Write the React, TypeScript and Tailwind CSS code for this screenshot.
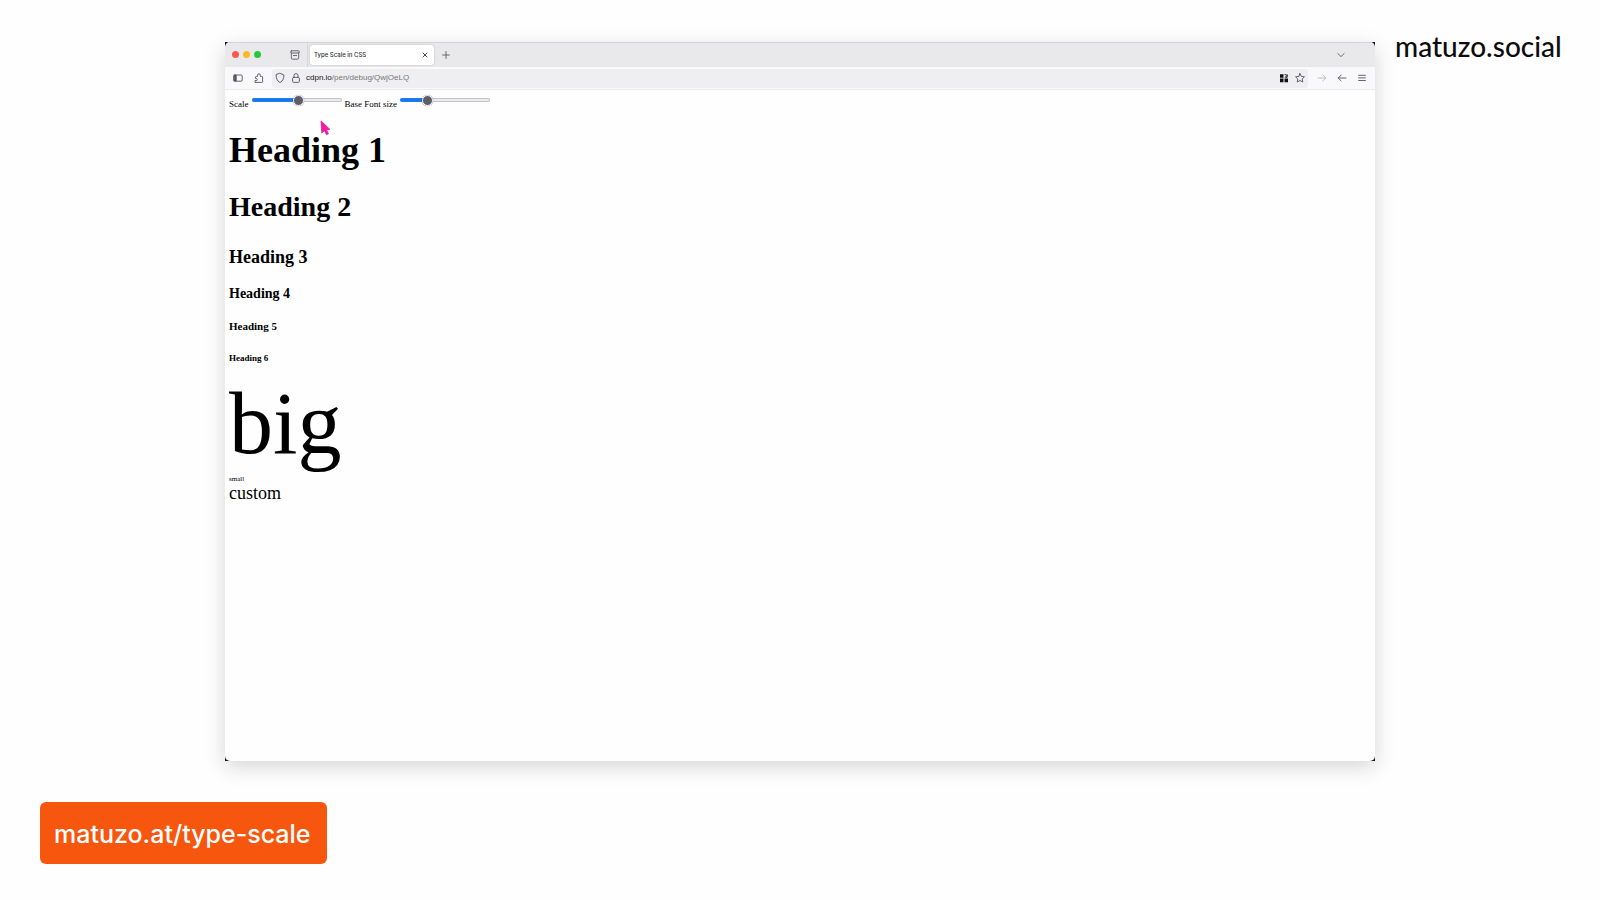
import { useState } from "react";
import type { ReactNode } from "react";

function Icon({ children, className = "h-3 w-3" }: { children: ReactNode; className?: string }) {
  return (
    <svg
      viewBox="0 0 12 12"
      className={`shrink-0 ${className}`}
      fill="none"
      stroke="currentColor"
      strokeWidth="0.9"
      strokeLinecap="round"
      strokeLinejoin="round"
      aria-hidden="true"
    >
      {children}
    </svg>
  );
}

function IconButton({ label, className = "", children }: { label: string; className?: string; children: ReactNode }) {
  return (
    <button type="button" aria-label={label} className={`flex shrink-0 items-center justify-center ${className}`}>
      <Icon>{children}</Icon>
    </button>
  );
}

function TabStrip() {
  return (
    <div className="flex h-[25px] items-center border-t border-[#d4d4d6] bg-[#e9e9eb] pb-px">
      <div className="flex gap-1 pl-[7px]">
        <span className="h-[7px] w-[7px] rounded-full bg-[#fb5850]" />
        <span className="h-[7px] w-[7px] rounded-full bg-[#fbb826]" />
        <span className="h-[7px] w-[7px] rounded-full bg-[#27c73c]" />
      </div>
      <IconButton label="Recent browsing" className="ml-7 text-[#5b5b62]">
        <rect x="1.700" y="1.800" width="8.600" height="2.200" rx="0.8" />
        <path d="M2.3 4v4.900c0 .8.5 1.300 1.300 1.300h4.800c.8 0 1.300-.5 1.300-1.300V4M4.400 6.500h3.200" />
      </IconButton>
      <span className="ml-1.5 h-6 w-px bg-[#d6d6da]" />
      <div className="ml-0.5 flex h-5 w-[124px] items-center justify-between rounded-[3px] bg-white pr-[3px] pl-1 shadow-[0_0_2px_rgba(0,0,0,0.25)]">
        <span className="font-[Inter,sans-serif] text-[6px] leading-2 font-medium text-[#333338]">Type Scale in CSS</span>
        <IconButton label="Close tab" className="text-[#333338]">
          <path d="M4 4l4 4M8 4l-4 4" />
        </IconButton>
      </div>
      <IconButton label="New tab" className="ml-1.5 text-[#5b5b62]">
        <path d="M6 2.6v6.8M2.6 6h6.8" />
      </IconButton>
      <IconButton label="List all tabs" className="mr-7 ml-auto text-[#5b5b62]">
        <path d="M2.8 4.5L6 7.6l3.2-3.1" />
      </IconButton>
    </div>
  );
}

function Toolbar() {
  return (
    <div className="flex h-[23px] items-center border-b border-[#ececef] bg-[#f9f9fb] text-[#55555c]">
      <IconButton label="Sidebar" className="ml-[7px]">
        <rect x="2" y="3" width="8.2" height="6.2" rx="1" />
        <path d="M2.200 3.2h2v5.8h-2z" fill="currentColor" />
      </IconButton>
      <IconButton label="Extensions" className="ml-[9px]">
        <path d="M2.4 10.4h6.4c.5 0 .8-.3.8-.8V5.2c0-.5-.3-.8-.8-.8H7.3V3.1a1.35 1.35 0 0 0-2.7 0v1.3H3.2c-.5 0-.8.3-.8.8v1.2h.8a1.1 1.1 0 0 1 0 2.2h-.8z" />
      </IconButton>
      <div className="ml-[7px] flex h-[19px] min-w-0 flex-1 items-center rounded-[3px] bg-[#efeff1] px-0.5">
        <IconButton label="Tracking protection">
          <path d="M6 1.4l3.9 1.5c0 3.4-.9 5.9-3.9 7.7-3-1.8-3.9-4.3-3.9-7.7z" />
        </IconButton>
        <IconButton label="Site information" className="ml-1">
          <rect x="2.6" y="5.4" width="6.8" height="5" rx="1" />
          <path d="M4 5.4V3.6a2 2 0 0 1 4 0v1.8" />
        </IconButton>
        <a href="#page" className="ml-1 font-['Liberation_Sans',sans-serif] text-[8px] leading-3 text-[#77777d]">
          <span className="text-[#15141a]">cdpn.io</span>/pen/debug/QwjOeLQ
        </a>
        <IconButton label="Page permissions" className="ml-auto text-[#111114]">
          <path
            d="M2 2.2h3.5v3.6H2zM2 6.6h3.5v3.6H2zM6.5 6.6H10v3.6H6.5z"
            fill="currentColor"
            stroke="none"
          />
          <path d="M6.9 2.7h1M9.2 2.7v2.6H7.3L9 3.4" />
        </IconButton>
        <IconButton label="Bookmark this page" className="ml-1">
          <path d="M6 1.6l1.35 2.8 3.05.4-2.2 2.15.55 3.05L6 8.5 3.25 10l.55-3.05L1.6 4.8l3.05-.4z" />
        </IconButton>
      </div>
      <IconButton label="Forward" className="ml-2 text-[#b9b9be]">
        <path d="M2 6h7.8M6.8 3l3 3-3 3" />
      </IconButton>
      <IconButton label="Back" className="ml-2">
        <path d="M10 6H2.2M5.2 3l-3 3 3 3" />
      </IconButton>
      <IconButton label="Menu" className="mr-[7px] ml-2">
        <path d="M2.6 3.3h6.8M2.6 5.9h6.8M2.6 8.5h6.8" />
      </IconButton>
    </div>
  );
}

function Slider({ id, label, initial }: { id: string; label: string; initial: number }) {
  const [value, setValue] = useState(initial);
  return (
    <div className="flex items-start gap-[3px]">
      <label htmlFor={id} className="pt-1 text-[9px] leading-3">
        {label}
      </label>
      <input
        id={id}
        type="range"
        min={0}
        max={100}
        value={value}
        onChange={(e) => setValue(Number(e.target.value))}
        style={{ backgroundImage: `linear-gradient(to right, #0a7bff ${value}%, #ececf0 ${value}%)` }}
        className="mt-1 h-1 w-[90px] appearance-none rounded-full shadow-[inset_0_0_0_1px_rgba(120,120,140,0.35)] [&::-webkit-slider-thumb]:h-[11px] [&::-webkit-slider-thumb]:w-[11px] [&::-webkit-slider-thumb]:appearance-none [&::-webkit-slider-thumb]:rounded-full [&::-webkit-slider-thumb]:border [&::-webkit-slider-thumb]:border-white [&::-webkit-slider-thumb]:bg-[#5e5e6b] [&::-webkit-slider-thumb]:shadow-[0_0_1px_rgba(0,0,0,0.5)]"
      />
    </div>
  );
}

function Page() {
  return (
    <main id="page" className="flex-1 bg-[#fefefe] pt-1 pl-1 font-['Liberation_Serif',serif] text-black">
      <div className="relative flex h-[35px] gap-[3px]">
        <Slider id="scale" label="Scale" initial={52} />
        <Slider id="base" label="Base Font size" initial={28} />
        <svg viewBox="0 0 11 16" className="absolute top-[26px] left-[91px] h-4 w-[11px]" aria-hidden="true">
          <path d="M1 .8l9 8.6-3.5.4 2 4-2 1-2-4.1L1.7 13z" fill="#f31aa6" stroke="#d80f92" strokeWidth="0.6" />
        </svg>
      </div>
      <h1 className="text-[36px] leading-[42px] font-bold">Heading 1</h1>
      <h2 className="mt-5 text-[28px] leading-8 font-bold">Heading 2</h2>
      <h3 className="mt-6 text-[18px] leading-5 font-bold">Heading 3</h3>
      <h4 className="mt-[19px] text-[14px] leading-4 font-bold">Heading 4</h4>
      <h5 className="mt-[18px] text-[11px] leading-3 font-bold">Heading 5</h5>
      <h6 className="mt-[22px] text-[9px] leading-2 font-bold">Heading 6</h6>
      <p className="mt-3 text-[88px] leading-[100px]">big</p>
      <p className="text-[7px] leading-[10px]">small</p>
      <p className="text-[18px] leading-[18px]">custom</p>
    </main>
  );
}

export default function App() {
  return (
    <div className="flex min-h-screen flex-col bg-[#fefefe]">
      <div className="grid grid-cols-[225px_1fr_225px] pt-[42px]">
        <div className="col-start-2 bg-[#15151c] shadow-[0_6px_20px_rgba(0,0,0,0.16)]">
          <div className="flex min-h-[719px] flex-col overflow-hidden rounded-[5px]">
            <TabStrip />
            <Toolbar />
            <Page />
          </div>
        </div>
        <div className="-mt-3 pl-5">
          <a href="#page" className="font-[Lato,sans-serif] text-[28px] leading-8 font-medium text-[#0c0c0c]">
            matuzo.social
          </a>
        </div>
      </div>
      <div className="mt-[41px] pl-10">
        <a
          href="#page"
          className="inline-flex h-[62px] items-center rounded-md bg-[#f6560d] pt-0.5 pr-4 pl-3.5 font-[Inter,sans-serif] text-[25px] leading-8 font-medium text-white"
        >
          matuzo.at/type-scale
        </a>
      </div>
    </div>
  );
}
